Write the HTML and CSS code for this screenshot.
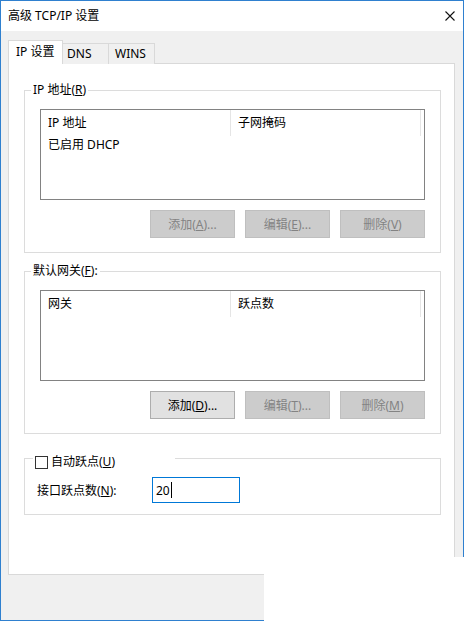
FILE: index.html
```html
<!DOCTYPE html>
<html lang="zh-CN">
<head>
    <meta charset="UTF-8">
    <title>高级 TCP/IP 设置</title>
    <link rel="stylesheet" href="styles.css">
</head>
<body>
    <div class="window">
        <div class="titlebar">
            <span class="title">高级 TCP/IP 设置</span>
            <svg class="close" width="10" height="10" viewBox="0 0 10 10">
                <path d="M0.5 0.5L9.5 9.5M9.5 0.5L0.5 9.5" stroke="#111" stroke-width="1.1" fill="none"/>
            </svg>
        </div>
        <div class="client">
            <div class="tabs">
                <div class="tab active">IP 设置</div>
                <div class="tab tab-dns">DNS</div>
                <div class="tab tab-wins">WINS</div>
            </div>
            <div class="panel">
                <fieldset class="group">
                    <legend>IP 地址(<u>R</u>)</legend>
                    <div class="group-body">
                        <div class="listbox">
                            <div class="list-head">
                                <div class="col">IP 地址</div>
                                <div class="col">子网掩码</div>
                            </div>
                            <div class="list-row">已启用 DHCP</div>
                        </div>
                        <div class="buttons">
                            <button class="btn" disabled>添加(<u>A</u>)...</button>
                            <button class="btn" disabled>编辑(<u>E</u>)...</button>
                            <button class="btn" disabled>删除(<u>V</u>)</button>
                        </div>
                    </div>
                </fieldset>

                <fieldset class="group gateway">
                    <legend>默认网关(<u>F</u>):</legend>
                    <div class="group-body">
                        <div class="listbox">
                            <div class="list-head">
                                <div class="col">网关</div>
                                <div class="col">跃点数</div>
                            </div>
                        </div>
                        <div class="buttons">
                            <button class="btn">添加(<u>D</u>)...</button>
                            <button class="btn" disabled>编辑(<u>T</u>)...</button>
                            <button class="btn" disabled>删除(<u>M</u>)</button>
                        </div>
                    </div>
                </fieldset>

                <fieldset class="group metric">
                    <legend>
                        <span class="check-label">
                            <span class="checkbox"></span>
                            <span>自动跃点(<u>U</u>)</span>
                        </span>
                    </legend>
                    <div class="metric-body">
                        <span class="metric-label">接口跃点数(<u>N</u>):</span>
                        <div class="num-input">20<span class="caret"></span></div>
                    </div>
                </fieldset>
            </div>
        </div>
    </div>
    <div class="stamp"></div>
</body>
</html>
```

FILE: styles.css
```css
* {
    box-sizing: border-box;
}
body {
    margin: 0;
    background: #ffffff;
    font-family: "Noto Sans", "Noto Sans CJK SC", sans-serif;
    font-size: 12px;
    color: #000;
}
.window {
    width: 464px;
    height: 621px;
    border: 1px solid #2f80cf;
    background: #f0f0f0;
}
.titlebar {
    height: 30px;
    background: #fff;
    display: flex;
    align-items: center;
    justify-content: space-between;
    padding: 0 8px 0 7px;
}
.title {
    line-height: 16px;
}
.client {
    padding: 9px 0 0 7px;
}

/* tab strip */
.tabs {
    display: flex;
    align-items: flex-end;
    height: 24px;
}
.tab {
    height: 21px;
    line-height: 19px;
    width: 47px;
    margin-left: -1px;
    background: #f0f0f0;
    border: 1px solid #d9d9d9;
    border-bottom: none;
    white-space: nowrap;
}
.tab-dns {
    padding-left: 4px;
}
.tab-wins {
    padding-left: 6px;
}
.tab.active {
    position: relative;
    z-index: 1;
    height: 24px;
    line-height: 22px;
    width: 55px;
    margin-left: 0;
    padding-left: 7px;
    background: #fff;
}
.panel {
    margin-top: -1px;
    width: 447px;
    height: 512px;
    background: #fff;
    border: 1px solid #d9d9d9;
    padding: 18px 13px 0 15px;
}

/* group boxes */
.group {
    margin: 0;
    padding: 0;
    min-width: 0;
    width: 417px;
    border: 1px solid #dcdcdc;
}
.group legend {
    margin-left: 6px;
    padding: 0 2px;
    line-height: 16px;
}
.gateway {
    margin-top: 10px;
}
.group-body {
    padding: 11px 15px 14px;
}
.listbox {
    height: 91px;
    border: 1px solid #828282;
    background: #fff;
}
.list-head {
    display: flex;
    height: 26px;
}
.col {
    width: 190px;
    border-right: 1px solid #e5e5e5;
    padding-left: 7px;
    line-height: 26px;
}
.list-row {
    height: 18px;
    line-height: 18px;
    padding-left: 7px;
}
.buttons {
    display: flex;
    justify-content: flex-end;
    gap: 10px;
    margin-top: 10px;
}
.btn {
    width: 85px;
    height: 28px;
    padding: 0;
    font: inherit;
    color: #000;
    background: #e1e1e1;
    border: 1px solid #adadad;
}
.btn:disabled {
    color: #838383;
    background: #cccccc;
    border-color: #bfbfbf;
}

/* metric group with checkbox header */
.metric {
    margin-top: 12px;
}
.metric legend {
    margin-left: 8px;
    padding: 8px 0 0 2px;
    width: 142px;
}
.check-label {
    display: flex;
    align-items: center;
    height: 16px;
    gap: 3px;
}
.checkbox {
    width: 13px;
    height: 13px;
    border: 1px solid #333;
    background: #fff;
}
.metric-body {
    display: flex;
    align-items: center;
    padding: 7px 12px 11px;
}
.metric-label {
    width: 115px;
}
.num-input {
    width: 88px;
    height: 26px;
    border: 1px solid #0078d7;
    padding-left: 3px;
    display: flex;
    align-items: center;
}
.caret {
    width: 1px;
    height: 16px;
    background: #000;
    margin-left: 1px;
}

/* white patch over the lower right corner */
.stamp {
    position: absolute;
    left: 264px;
    top: 557px;
    width: 201px;
    height: 67px;
    background: #fff;
}
```
